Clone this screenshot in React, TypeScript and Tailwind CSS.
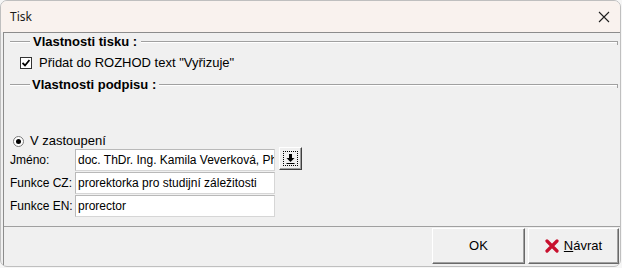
import React from 'react';

function Etched({ grow }: { grow?: boolean }) {
  return (
    <div className={grow ? 'flex-1 h-[2px] border-t border-b border-t-[#a0a0a0] border-b-white' : 'w-[20px] h-[2px] border-t border-b border-t-[#a0a0a0] border-b-white'} />
  );
}

function Field({ label, value }: { label: string; value: string }) {
  return (
    <div className="flex items-center h-[22px] text-[12px]">
      <span className="w-[71px] shrink-0 pl-[6px] whitespace-nowrap">{label}</span>
      <div className="w-[200px] h-[22px] bg-white border border-[#d6d6d6] border-t-[#b9b9b9] border-l-[#b9b9b9] pl-[2px] flex items-center overflow-hidden whitespace-nowrap">
        {value}
      </div>
    </div>
  );
}

export default function App() {
  return (
    <div className="w-[622px] h-[268px] bg-[#f6f6f6] text-black text-[13px]" style={{ fontFamily: '"Liberation Sans", Arial, sans-serif' }}>
      <div className="w-[621px] h-[267px] rounded-[7px] border border-[#bfbfbf] overflow-hidden flex flex-col bg-[#f0f0f0]">
        {/* Title bar */}
        <div className="h-[31px] shrink-0 bg-[#f9f2ee] flex items-center justify-between pl-[9px] pr-[9px]">
          <span className="text-[12px] text-[#1a1a1a]" style={{ fontFamily: '"Noto Sans", sans-serif' }}>Tisk</span>
          <svg width="12" height="12" viewBox="0 0 12 12" className="mr-[1px]">
            <path d="M1 1 L11 11 M11 1 L1 11" stroke="#1f1f1f" strokeWidth="1.1" fill="none" />
          </svg>
        </div>

        {/* Body */}
        <div className="flex-1 flex flex-col ml-[2px] border-l border-t border-[#8c8c8c]">
          <div className="h-[194px] border-b border-[#a0a0a0] flex flex-col">
            <div className="flex items-center h-[18px] pl-[6px] pr-[2px]">
              <Etched />
              <span className="font-bold pl-[3px] pr-[4px] whitespace-nowrap">Vlastnosti tisku :</span>
              <Etched grow />
              <div className="w-[1px] h-[4px] bg-[#a0a0a0] self-start mt-[8px]" />
            </div>
            <div className="flex items-center h-[20px] mt-[2px] pl-[16px]">
              <div className="w-[12px] h-[12px] bg-white border border-[#333] flex items-center justify-center">
                <svg width="8" height="8" viewBox="0 0 8 8">
                  <path d="M0.5 4 L3 6.5 L7.5 1" stroke="#000" strokeWidth="1.8" fill="none" />
                </svg>
              </div>
              <span className="ml-[7px]">Přidat do ROZHOD text "Vyřizuje"</span>
            </div>
            <div className="flex items-center h-[18px] mt-[3px] pl-[6px] pr-[2px]">
              <Etched />
              <span className="font-bold pl-[2px] pr-[3px] whitespace-nowrap">Vlastnosti podpisu :</span>
              <Etched grow />
              <div className="w-[1px] h-[4px] bg-[#a0a0a0] self-start mt-[8px]" />
            </div>

            <div className="flex items-center h-[16px] mt-[39px] pl-[9px]">
              <div className="w-[11px] h-[11px] rounded-full bg-white border border-[#7a7a7a] flex items-center justify-center">
                <div className="w-[5px] h-[5px] rounded-full bg-black" />
              </div>
              <span className="ml-[6px]">V zastoupení</span>
            </div>

            <div className="flex flex-col gap-[1px]">
              <div className="flex items-start">
                <Field label="Jméno:" value="doc. ThDr. Ing. Kamila Veverková, Ph.D." />
                <button className="ml-[4px] -mt-[2px] w-[23px] h-[23px] bg-[#f0f0f0] border border-t-white border-l-white border-r-[#404040] border-b-[#404040] shadow-[inset_-1px_-1px_0_#a0a0a0] flex items-center justify-center">
                  <div className="w-[15px] h-[15px] border border-dotted border-black flex items-center justify-center">
                    <svg width="9" height="10" viewBox="0 0 9 10">
                      <path d="M3 0 H6 V4 H8.5 L4.5 8 L0.5 4 H3 Z" fill="#000" />
                      <rect x="0.5" y="9" width="8" height="1" fill="#000" />
                    </svg>
                  </div>
                </button>
              </div>
              <Field label="Funkce CZ:" value="prorektorka pro studijní záležitosti" />
              <Field label="Funkce EN:" value="prorector" />
            </div>
          </div>

          {/* Footer buttons */}
          <div className="flex-1 flex justify-end items-start pt-[1px] pr-[1px] gap-[3px]">
            <button className="w-[93px] h-[36px] bg-[#f0f0f0] border border-t-white border-l-white border-r-[#696969] border-b-[#696969] shadow-[inset_-1px_-1px_0_#a0a0a0] flex items-center justify-center">
              OK
            </button>
            <button className="w-[91px] h-[36px] bg-[#f0f0f0] border border-t-white border-l-white border-r-[#696969] border-b-[#696969] shadow-[inset_-1px_-1px_0_#a0a0a0] flex items-center justify-center gap-[5px]">
              <svg width="14" height="14" viewBox="0 0 14 14">
                <path d="M2 2 L12 12 M12 2 L2 12" stroke="#c8102e" strokeWidth="3.2" strokeLinecap="round" fill="none" />
              </svg>
              <span><span className="underline">N</span>ávrat</span>
            </button>
          </div>
        </div>
      </div>
    </div>
  );
}
